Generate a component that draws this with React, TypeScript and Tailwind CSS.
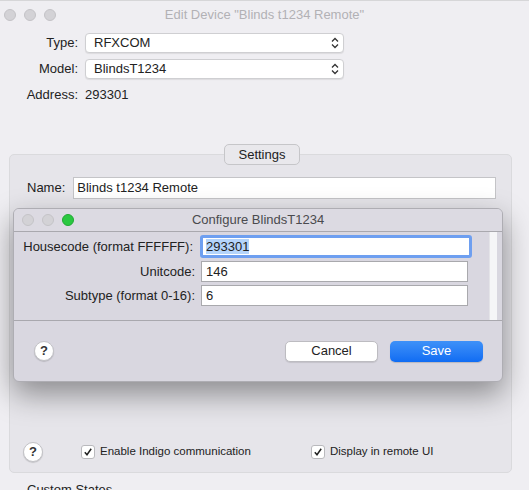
import React from 'react';

const font = { fontFamily: '"Liberation Sans", Arial, sans-serif' };

const Lights = ({ green }: { green?: boolean }) => (
  <div className="flex gap-[8px]">
    <span className="w-[12px] h-[12px] rounded-full bg-[#d3d2d6] border border-[#c4c3c7]" />
    <span className="w-[12px] h-[12px] rounded-full bg-[#d3d2d6] border border-[#c4c3c7]" />
    <span
      className={`w-[12px] h-[12px] rounded-full border ${
        green ? 'bg-[#2ac840] border-[#22a834]' : 'bg-[#d3d2d6] border-[#c4c3c7]'
      }`}
    />
  </div>
);

const Select = ({ value }: { value: string }) => (
  <div className="flex-1 h-[20px] flex items-center justify-between bg-white rounded-[4px] border border-[#cfcfd2] shadow-[0_1px_1px_rgba(0,0,0,0.08)] pl-[8px] pr-[4px]">
    <span className="text-[13px] text-[#222]">{value}</span>
    <svg width="8" height="12" viewBox="0 0 8 12" fill="none" stroke="#333" strokeWidth="1.3">
      <path d="M1 4.5 L4 1.5 L7 4.5" />
      <path d="M1 7.5 L4 10.5 L7 7.5" />
    </svg>
  </div>
);

const HelpButton = () => (
  <div className="w-[20px] h-[20px] rounded-full bg-white border border-[#c2c2c6] shadow-[0_1px_1px_rgba(0,0,0,0.15)] flex items-center justify-center text-[13px] font-bold text-[#333]">
    ?
  </div>
);

const Check = ({ label }: { label: string }) => (
  <div className="flex items-center gap-[5px]">
    <span className="w-[14px] h-[14px] rounded-[3px] bg-white border border-[#b9b9bd] flex items-center justify-center">
      <svg width="10" height="10" viewBox="0 0 10 10" fill="none" stroke="#222" strokeWidth="1.5">
        <path d="M1.8 5.2 L4 7.8 L8.2 1.8" />
      </svg>
    </span>
    <span className="text-[11.5px] text-[#222]">{label}</span>
  </div>
);

export default function App() {
  return (
    <div className="relative w-[529px] h-[490px] overflow-hidden bg-[#efeef2] text-[#222]" style={font}>
      {/* title bar */}
      <div className="relative h-[28px] flex items-center pl-[4px] border-t border-[#d6d6d8]">
        <Lights />
        <div className="absolute inset-0 flex items-center justify-center text-[13px] text-[#b2b1b5]">
          Edit Device "Blinds t1234 Remote"
        </div>
      </div>

      {/* device fields */}
      <div className="flex flex-col gap-[6px] pt-[5px] pl-[7px] pr-[185px]">
        <div className="flex items-center gap-[7px]">
          <span className="w-[71px] text-right text-[13px]">Type:</span>
          <Select value="RFXCOM" />
        </div>
        <div className="flex items-center gap-[7px]">
          <span className="w-[71px] text-right text-[13px]">Model:</span>
          <Select value="BlindsT1234" />
        </div>
        <div className="flex items-center gap-[7px] h-[20px]">
          <span className="w-[71px] text-right text-[13px]">Address:</span>
          <span className="text-[13px]">293301</span>
        </div>
      </div>

      {/* settings group */}
      <div className="relative mt-[49px] mx-[9px] w-[503px] h-[319px] rounded-[5px] bg-[#e6e5ea] border border-[#dadadd] flex flex-col">
        <div className="absolute -top-[11px] left-[214px] w-[76px] h-[21px] rounded-[5px] bg-[#e9e8ec] border border-[#c6c6c9] flex items-center justify-center text-[13px]">
          Settings
        </div>
        <div className="flex items-center gap-[8px] pt-[22px] pl-[17px]">
          <span className="text-[13px]">Name:</span>
          <div className="w-[423px] h-[22px] bg-white border border-[#c4c4c7] flex items-center pl-[3px] text-[13px]">
            Blinds t1234 Remote
          </div>
        </div>
        <div className="flex-1" />
        <div className="flex items-center pl-[13px] pb-[10px]">
          <HelpButton />
          <div className="ml-[38px]">
            <Check label="Enable Indigo communication" />
          </div>
          <div className="ml-[60px]">
            <Check label="Display in remote UI" />
          </div>
        </div>
      </div>
      <div className="pl-[27px] pt-[7px] text-[13px]">Custom States</div>

      {/* configure sheet */}
      <div className="absolute left-[13px] top-[208px] w-[490px] h-[174px] rounded-[6px] bg-[#d9d7e0] border border-[#aeadb3] shadow-[0_12px_30px_rgba(0,0,0,0.4)] flex flex-col overflow-hidden">
        <div className="relative h-[23px] flex items-center pl-[8px] border-b border-[#a9a8ae] bg-[#dcdae2]">
          <Lights green />
          <div className="absolute inset-0 flex items-center justify-center text-[13px] text-[#4a4a4e]">
            Configure BlindsT1234
          </div>
        </div>
        <div className="flex h-[89px] border-b border-[#a9a8ae]">
          <div className="flex-1 flex flex-col gap-[3px] pt-[3px]">
            <div className="flex items-center">
              <span className="w-[186px] text-right text-[13px] pr-[7px]">Housecode (format FFFFFF):</span>
              <div className="w-[272px] h-[23px] border-[3px] border-[#6e9ff0] rounded-[3px] bg-white flex items-center pl-[3px]">
                <span className="text-[13px] bg-[#b4d4fb] leading-[15px]">293301</span>
              </div>
            </div>
            <div className="flex items-center">
              <span className="w-[187px] text-right text-[13px] pr-[6px]">Unitcode:</span>
              <div className="w-[267px] h-[21px] bg-white border border-[#a9a9ad] flex items-center pl-[4px] text-[13px]">146</div>
            </div>
            <div className="flex items-center">
              <span className="w-[187px] text-right text-[13px] pr-[6px]">Subtype (format 0-16):</span>
              <div className="w-[267px] h-[21px] bg-white border border-[#a9a9ad] flex items-center pl-[4px] text-[13px]">6</div>
            </div>
          </div>
          <div className="w-[8px] mr-[5px] bg-[#f5f5f7] border-l border-[#e4e4e8]" />
        </div>
        <div className="flex-1 flex items-center pl-[20px] pr-[19px]">
          <HelpButton />
          <div className="flex-1" />
          <div className="w-[93px] h-[21px] rounded-[5px] bg-white border border-[#bdbcc1] shadow-[0_1px_1px_rgba(0,0,0,0.1)] flex items-center justify-center text-[13px]">
            Cancel
          </div>
          <div className="ml-[12px] w-[93px] h-[21px] rounded-[5px] bg-gradient-to-b from-[#3e91f8] to-[#0f6cf3] shadow-[0_1px_1px_rgba(0,0,0,0.15)] flex items-center justify-center text-[13px] text-white">
            Save
          </div>
        </div>
      </div>
    </div>
  );
}
